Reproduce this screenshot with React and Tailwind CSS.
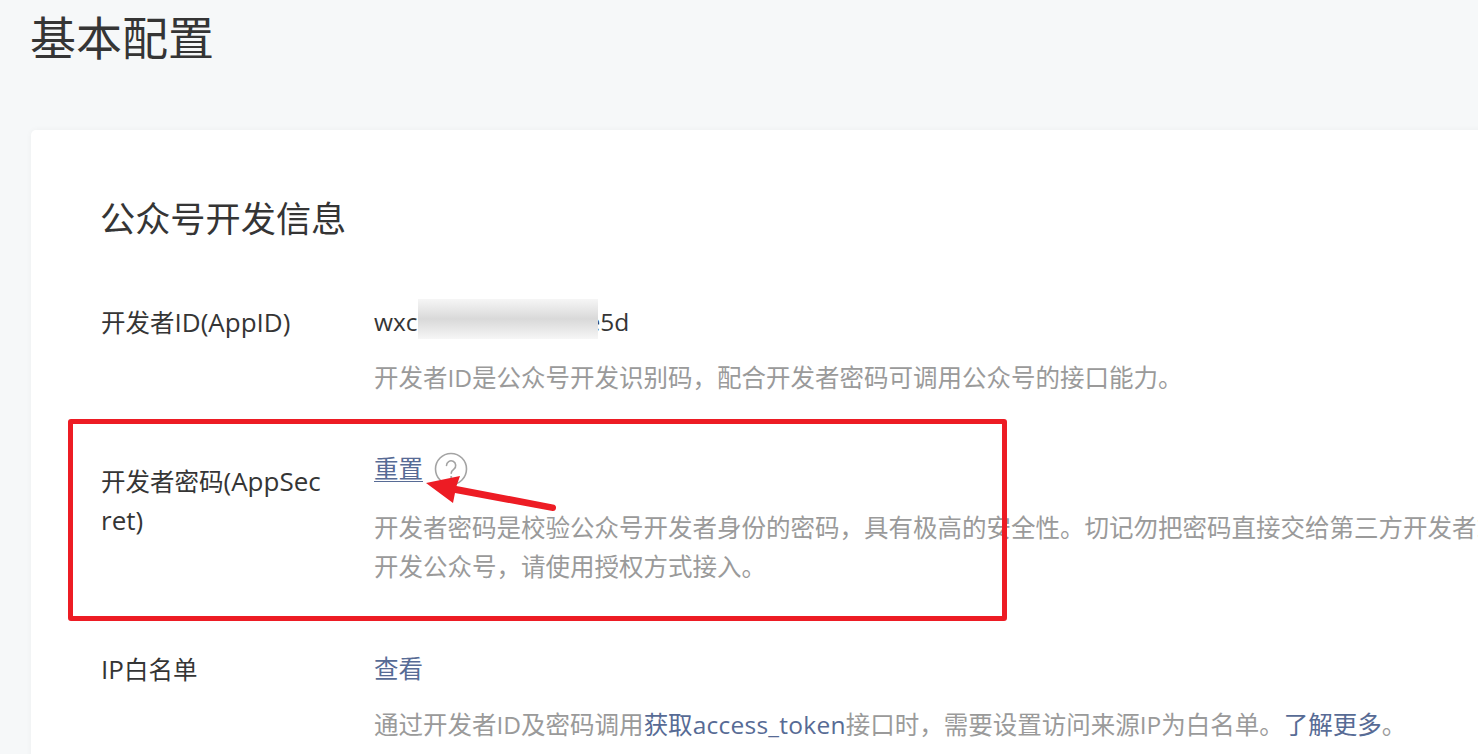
import React from 'react';

const font = { fontFamily: '"Open Sans", "Noto Sans CJK SC", sans-serif' };

const QuestionIcon = () => (
  <svg width="34" height="34" viewBox="0 0 34 34" fill="none" className="ml-[11px] shrink-0">
    <circle cx="17" cy="17" r="15.5" stroke="#a3a3a3" strokeWidth="1.6" />
    <path d="M12.5 13.5a4.6 4.6 0 1 1 7.4 3.6c-1.7 1.3-2.7 2.3-2.7 4.2" stroke="#a3a3a3" strokeWidth="1.6" strokeLinecap="round" />
    <circle cx="17.2" cy="25" r="1.1" fill="#a3a3a3" />
  </svg>
);

const Row = ({ label, labelClass, className, children }) => (
  <div className={`flex ${className}`}>
    <div className={`w-[225px] mr-[48px] shrink-0 break-all text-[#353535] ${labelClass || ''}`}>{label}</div>
    <div className="flex-1 min-w-0">{children}</div>
  </div>
);

const Latin = ({ children }) => <span className="text-[26px]">{children}</span>;

const Desc = ({ className, children }) => <p className={`text-[#9a9a9a] ${className}`}>{children}</p>;

export default function App() {
  return (
    <div className="relative w-full h-screen overflow-hidden bg-[#f6f8f9]" style={font}>
      <h1 className="pl-[30px] text-[46px] leading-[74px] font-normal text-[#353535]">基本配置</h1>

      <div className="mt-[56px] ml-[31px] w-[1600px] bg-white rounded-[5px] shadow-[0_0_6px_rgba(0,0,0,0.04)] pl-[70px] pt-[62px] pb-[60px] text-[24.5px] leading-[39px]">
        <h2 className="-ml-px text-[35.2px] leading-[52px] font-normal text-[#353535]">公众号开发信息</h2>

        <Row label={<>开发者<Latin>ID(AppID)</Latin></>} labelClass="pt-[2px]" className="mt-[57px]">
          <div className="flex items-center text-[#353535]">
            <span>wxc</span>
            <span className="relative z-10 -translate-y-[2px] w-[180px] h-[40px] -mr-[11px] bg-gradient-to-b from-[#f6f6f6] via-[#d9d9d9] to-[#f6f6f6]" />
            <span>e5d</span>
          </div>
          <Desc className="mt-[17px]">开发者ID是公众号开发识别码，配合开发者密码可调用公众号的接口能力。</Desc>
        </Row>

        <Row label={<>开发者密码<Latin>(AppSecret)</Latin></>} labelClass="pt-[13px]" className="mt-[52px]">
          <div className="flex items-center h-[39px]">
            <a className="text-[#576b95] underline decoration-1 underline-offset-[3px]">重置</a>
            <QuestionIcon />
          </div>
          <Desc className="mt-[20px]">
            <span className="block whitespace-nowrap">开发者密码是校验公众号开发者身份的密码，具有极高的安全性。切记勿把密码直接交给第三方开发者或直接存储在代码中。如需第三方代</span>
            <span className="block">开发公众号，请使用授权方式接入。</span>
          </Desc>
        </Row>

        <Row label={<><Latin>IP</Latin>白名单</>} labelClass="pt-[1px]" className="mt-[63px]">
          <a className="text-[#576b95]">查看</a>
          <Desc className="mt-[17px]">
            通过开发者ID及密码调用<a className="text-[#576b95]">获取<span className="tracking-[0.25px]">access_token</span></a>接口时，需要设置访问来源IP为白名单。<a className="text-[#576b95]">了解更多</a>。
          </Desc>
        </Row>
      </div>

      {/* annotation drawn over the page */}
      <div className="absolute left-[68px] top-[419px] w-[939px] h-[202px] border-[5px] border-[#ed1c24] rounded-[3px]" />
      <svg className="absolute left-0 top-0 pointer-events-none" width="1478" height="754" fill="none">
        <path d="M426 483L460 476L456.5 486L553 504.5A3 3 0 0 1 552.5 511L455 493L453 503Z" fill="#ed1c24" />
      </svg>
    </div>
  );
}
